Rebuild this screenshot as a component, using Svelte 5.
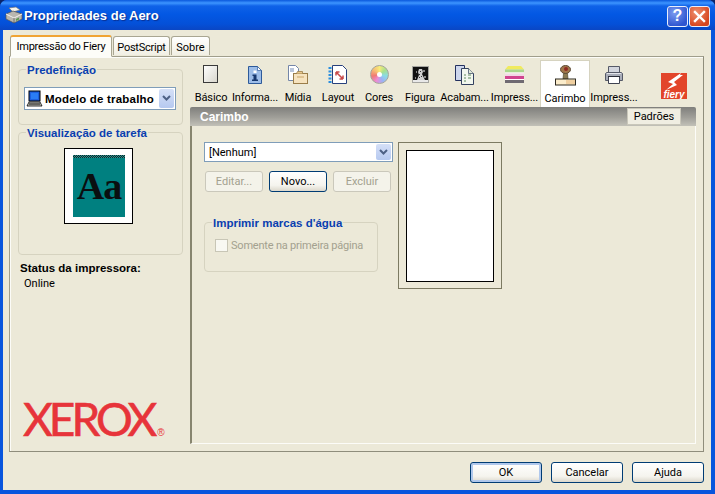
<script lang="ts">
  const tools = [
    { id: 'basico', label: 'Básico', w: 42 },
    { id: 'info', label: 'Informa...', w: 46 },
    { id: 'midia', label: 'Mídia', w: 40 },
    { id: 'layout', label: 'Layout', w: 40 },
    { id: 'cores', label: 'Cores', w: 42 },
    { id: 'figura', label: 'Figura', w: 40 },
    { id: 'acabam', label: 'Acabam...', w: 49 },
    { id: 'impress', label: 'Impress...', w: 51 },
    { id: 'carimbo', label: 'Carimbo', w: 50 },
    { id: 'printer', label: 'Impress...', w: 48 }
  ];
</script>

<div class="window">
  <header class="titlebar">
    <svg class="title-icon" width="18" height="18" viewBox="0 0 18 18">
      <path d="M4 2l7-1 4 3-7 2z" fill="#f4f4f0" stroke="#777" stroke-width=".7"/>
      <path d="M1 8l7-3 9 3v5l-8 4-8-4z" fill="#b9b7b0" stroke="#555" stroke-width=".7"/>
      <path d="M1 8l8 4 8-4" fill="none" stroke="#f2f2ee" stroke-width="1"/>
      <path d="M9 12v5" stroke="#555" stroke-width=".7"/>
      <path d="M11 13l3-1.500v2l-3 1.500z" fill="#5a9a50"/>
    </svg>
    <span class="title-text">Propriedades de Aero</span>
    <div class="caption-buttons">
      <div class="cap help">?</div>
      <div class="cap close">
        <svg width="13" height="13" viewBox="0 0 13 13"><path d="M2 2l9 9M11 2l-9 9" stroke="#fff" stroke-width="2.400" stroke-linecap="square"/></svg>
      </div>
    </div>
  </header>

  <div class="client">
    <nav class="tabs">
      <div class="tab active">Impressão do Fiery</div>
      <div class="tab tab-ps">PostScript</div>
      <div class="tab tab-sobre">Sobre</div>
    </nav>

    <section class="sheet">
      <aside class="left">
        <div class="group preset">
          <span class="legend">Predefinição</span>
          <div class="combo preset-combo">
            <svg class="pc-icon" width="17" height="17" viewBox="0 0 17 17">
              <rect x="3" y="1" width="11" height="10" fill="#1d5fe0" stroke="#000"/>
              <rect x="5" y="3" width="7" height="6" fill="#2a7cf5"/>
              <path d="M3 12h11l2 4H1z" fill="#c9c9c0" stroke="#000" stroke-width=".8"/>
              <path d="M3 14h11" stroke="#000"/>
            </svg>
            <span class="preset-value">Modelo de trabalho</span>
            <span class="arrow">
              <svg width="9" height="7" viewBox="0 0 9 7"><path d="M1 1l3.500 3.500L8 1" fill="none" stroke="#4d6185" stroke-width="2"/></svg>
            </span>
          </div>
        </div>

        <div class="group job">
          <span class="legend">Visualização de tarefa</span>
          <div class="job-sheet">
            <div class="job-dither"></div>
            <div class="job-teal"><span>Aa</span></div>
          </div>
        </div>

        <div class="status">
          <strong>Status da impressora:</strong>
          <p>Online</p>
        </div>

        <div class="xerox">XEROX<span class="reg">®</span></div>
      </aside>

      <main class="right">
        <div class="toolbar">
          {#each tools as t}
            <div class="tool" class:selected={t.id === 'carimbo'} style="width: {t.w}px">
              <div class="tool-icon">
                {#if t.id === 'basico'}
                  <svg width="16" height="19" viewBox="0 0 16 19"><defs><linearGradient id="pg" x1="0" y1="0" x2="1" y2="1"><stop offset="0" stop-color="#fff"/><stop offset="1" stop-color="#d8d6cc"/></linearGradient></defs><rect x=".5" y=".5" width="14" height="17" fill="url(#pg)" stroke="#3a3a3a"/></svg>
                {:else if t.id === 'info'}
                  <svg width="16" height="20" viewBox="0 0 16 20"><path d="M1.500 1.500h9l4 4v13h-13z" fill="#9dbde8" stroke="#2d5a9a"/><path d="M10.500 1.500v4h4z" fill="#fff" stroke="#2d5a9a" stroke-width=".7"/><rect x="6.500" y="5.500" width="3" height="2.500" fill="#fff"/><path d="M5.500 9.500h4v5h1.500v1.500H5v-1.500h1.500v-3.500h-1z" fill="#17386f"/></svg>
                {:else if t.id === 'midia'}
                  <svg width="22" height="20" viewBox="0 0 22 20"><path d="M1.500.5h7l3 3v12h-10z" fill="#fff" stroke="#7486a8"/><path d="M3 3h4v4H3z" fill="#b9c6dc"/><rect x="6.500" y="8.500" width="14" height="10" fill="#f6e3bf" stroke="#9a7d4a"/><path d="M6.500 8.500h3l1-2h5v2" fill="#e9c98e" stroke="#9a7d4a" stroke-width=".8"/><path d="M10 12h7" stroke="#c9a56a"/></svg>
                {:else if t.id === 'layout'}
                  <svg width="20" height="20" viewBox="0 0 20 20"><path d="M4.500.5h10l4 4v14h-14z" fill="#fff" stroke="#27407d"/><path d="M2 2v16" stroke="#2a8fe0" stroke-width="3" stroke-dasharray="2 1.500"/><path d="M8 7l7 7M8 7v3.500M8 7h3.500M15 14v-3.500M15 14h-3.500" fill="none" stroke="#c84a4a" stroke-width="1.500"/></svg>
                {:else if t.id === 'cores'}
                  <div class="wheel"><div></div></div>
                {:else if t.id === 'figura'}
                  <svg width="17" height="17" viewBox="0 0 17 17"><rect x=".5" y=".5" width="16" height="16" fill="#111" stroke="#a5a5a0"/><path d="M7 3h3l1 3-1 2 3 6H5l2-5-1-3z" fill="#cfcfcf"/><path d="M8 5h1v1H8zM7 8h1v1H7zM9 10h1v1H9zM7 11h1v1H7z" fill="#333"/><path d="M11 4h2v2h-2zM4 5h1v2H4zM12 10h2v2h-2zM3 11h1v2H3z" fill="#888"/><path d="M1 14h15v2H1z" fill="#e8e8e8"/></svg>
                {:else if t.id === 'acabam'}
                  <svg width="21" height="21" viewBox="0 0 21 21"><path d="M1.500 1.500h9v15h-9z" fill="#cdd6ec" stroke="#23305e"/><path d="M7.500 4.500h7l5 5v11h-12z" fill="#f2f7ee" stroke="#33415f"/><path d="M14.500 4.500v5h5" fill="#dfe8d8" stroke="#33415f" stroke-width=".7"/><path d="M10 11h2M14 11h3M10 14h2M14 14h3M10 17h2" stroke="#5f8a5f"/></svg>
                {:else if t.id === 'impress'}
                  <svg width="21" height="20" viewBox="0 0 21 20"><path d="M4 1h13l3 3.500H1z" fill="#f0ea5e"/><rect x="1" y="4.500" width="19" height="3" fill="#a9d98c"/><rect x="1" y="7.500" width="19" height="1" fill="#fff"/><rect x="1" y="8.500" width="19" height="2.500" fill="#f2d8e6"/><rect x="1" y="11" width="19" height="3" fill="#d0458f"/><rect x="1" y="14" width="19" height="1" fill="#fff"/><rect x="1" y="15" width="19" height="3" fill="#6f6a72"/></svg>
                {:else if t.id === 'carimbo'}
                  <svg width="21" height="22" viewBox="0 0 21 22"><ellipse cx="10.500" cy="4.500" rx="5" ry="4" fill="#a0764a" stroke="#5d4a35"/><circle cx="11" cy="4" r="2" fill="#8f2a22"/><path d="M8.500 8.500h4l.5 5.500H8z" fill="#8a7a52" stroke="#544a30" stroke-width=".7"/><rect x=".5" y="14" width="20" height="6" fill="#fbeccb" stroke="#2e2a20"/><rect x="11" y="15" width="9" height="4" fill="#f0cfa0"/></svg>
                {:else if t.id === 'printer'}
                  <svg width="20" height="20" viewBox="0 0 20 20"><path d="M4.500 1.500h11v6h-11z" fill="#d3d6de" stroke="#565a68"/><path d="M2.500 7.500h15l1 1v7h-17v-7z" fill="#a9adb8" stroke="#565a68"/><path d="M3 8.500h14" stroke="#e4e6ec"/><path d="M4.500 11.500h11v7h-11z" fill="#fff" stroke="#3f4352"/><path d="M4 11.500h12" stroke="#2a2d38"/></svg>
                {/if}
              </div>
              <span class="tool-label">{t.label}</span>
            </div>
          {/each}
          <div class="fiery">
            <svg width="26" height="26" viewBox="0 0 26 26">
              <path d="M0 0h26v26H0z" fill="#e2452a"/>
              <path d="M20 0L7 9l5 2-7 6 11-5-3-3 9-7-3 0z" fill="#fff"/>
              <text x="13" y="24.500" text-anchor="middle" class="fiery-word">fiery</text>
            </svg>
          </div>
        </div>

        <div class="section-bar">
          <span>Carimbo</span>
          <button class="defaults">Padrões</button>
        </div>

        <div class="sunken">
          <div class="stamp-form">
            <div class="controls">
              <div class="combo stamp-combo">
                <span class="stamp-value">[Nenhum]</span>
                <span class="arrow">
                  <svg width="9" height="7" viewBox="0 0 9 7"><path d="M1 1l3.500 3.500L8 1" fill="none" stroke="#4d6185" stroke-width="2"/></svg>
                </span>
              </div>
              <div class="btn-row">
                <div class="xp-btn off">Editar...</div>
                <div class="xp-btn">Novo...</div>
                <div class="xp-btn off">Excluir</div>
              </div>
              <div class="group watermark">
                <span class="legend">Imprimir marcas d'água</span>
                <label class="check"><span class="box"></span>Somente na primeira página</label>
              </div>
            </div>
            <div class="page-preview"><div class="page"></div></div>
          </div>
        </div>
      </main>
    </section>

    <footer class="dialog-buttons">
      <div class="xp-btn wide default">OK</div>
      <div class="xp-btn wide">Cancelar</div>
      <div class="xp-btn wide">Ajuda</div>
    </footer>
  </div>
</div>

<style>
  :global(body) {
    margin: 0;
    background: #0a246a;
  }

  .window {
    width: 715px;
    height: 494px;
    display: flex;
    flex-direction: column;
    box-sizing: border-box;
    overflow: hidden;
    border-radius: 7px 7px 0 0;
    background: #0855dd;
    font-family: Roboto, "Liberation Sans", sans-serif;
    font-size: 11px;
    color: #000;
  }

  .titlebar {
    height: 30px;
    flex: none;
    display: flex;
    align-items: center;
    padding: 0 5px 0 4px;
    background: linear-gradient(#0a58dd 0, #3d95ff 3px, #0f62e8 6px, #0358e4 14px, #0450d8 24px, #0a46c4 30px);
  }

  .title-icon { margin-left: 1px; }

  .title-text {
    margin-left: 1px;
    font-family: "Liberation Sans", Arial, sans-serif;
    font-weight: bold;
    font-size: 13px;
    color: #fff;
    text-shadow: 1px 1px 1px #0a2f90;
  }

  .caption-buttons {
    margin-left: auto;
    display: flex;
    gap: 1px;
    margin-top: 2px;
  }

  .cap {
    width: 21px;
    height: 21px;
    box-sizing: border-box;
    border: 1px solid #e8eefc;
    border-radius: 3px;
    display: flex;
    align-items: center;
    justify-content: center;
    color: #fff;
    font-family: "Liberation Sans", Arial, sans-serif;
    font-weight: bold;
    font-size: 16px;
  }

  .help { background: radial-gradient(circle at 35% 30%, #7e9df0, #2e55d0 75%); }
  .close { background: radial-gradient(circle at 35% 30%, #ee8f6e, #d6451f 75%); }

  .client {
    flex: 1;
    margin: 0 4px 4px 3px;
    background: #ece9d8;
    display: flex;
    flex-direction: column;
    min-height: 0;
  }

  .tabs {
    display: flex;
    align-items: flex-end;
    height: 26px;
    margin-left: 7px;
    position: relative;
    z-index: 1;
    flex: none;
  }

  .tab {
    height: 14px;
    padding-top: 4px;
    box-sizing: content-box;
    border: 1px solid #a9a692;
    border-bottom: none;
    border-radius: 3px 3px 0 0;
    margin-right: 1px;
    text-align: center;
    line-height: 14px;
    letter-spacing: -0.25px;
    background: linear-gradient(#fff, #f1efe4);
    margin-bottom: 1px;
  }

  .tab.active {
    width: 100px;
    height: 16px;
    padding-top: 3px;
    background: #fdfdf8;
    border-top: 2px solid #f0a433;
    border-bottom: 1px solid #fdfdf8;
    margin-bottom: -1px;
  }

  .tab-ps { width: 55px; }
  .tab-sobre { width: 37px; letter-spacing: 0; }

  .sheet {
    width: 695px;
    height: 396px;
    margin-left: 6px;
    box-sizing: border-box;
    border: 1px solid #a09e8c;
    border-right-color: #8f8d7c;
    border-bottom-color: #8f8d7c;
    box-shadow: inset 1px 1px 0 #fcfcf8;
    display: flex;
    flex: none;
    background: #ece9d8;
  }

  .left {
    width: 165px;
    margin-left: 8px;
    padding-top: 12px;
    flex: none;
    display: flex;
    flex-direction: column;
  }

  .group {
    position: relative;
    box-sizing: border-box;
    border: 1px solid #d6d3c0;
    border-radius: 4px;
  }

  .legend {
    position: absolute;
    top: -6px;
    left: 7px;
    padding: 0 1px;
    background: #ece9d8;
    font-family: "Liberation Sans", Arial, sans-serif;
    font-weight: bold;
    font-size: 11.500px;
    line-height: 13px;
    color: #0a3fb0;
    white-space: nowrap;
  }

  .preset {
    height: 56px;
    padding: 17px 5px 0 5px;
  }

  .combo {
    background: #fff;
    border: 1px solid #7f9db9;
    box-sizing: border-box;
    display: flex;
    align-items: center;
  }

  .preset-combo {
    height: 23px;
    width: 152px;
  }

  .pc-icon { margin-left: 1px; flex: none; }

  .preset-value {
    font-family: "Liberation Sans", Arial, sans-serif;
    font-weight: bold;
    font-size: 11.500px;
    letter-spacing: 0.2px;
    margin-left: 2px;
    white-space: nowrap;
  }

  .arrow {
    margin-left: auto;
    width: 15px;
    height: calc(100% - 2px);
    margin-right: 1px;
    flex: none;
    background: linear-gradient(#d5e0f7, #b6c9f0);
    border-radius: 2px;
    display: flex;
    align-items: center;
    justify-content: center;
  }

  .job {
    margin-top: 7px;
    height: 123px;
    padding-top: 15px;
  }

  .job-sheet {
    width: 69px;
    height: 76px;
    margin-left: 45px;
    box-sizing: border-box;
    border: 1px solid #000;
    background: #fff;
    padding: 6px 7px 0 8px;
  }

  .job-dither {
    height: 3px;
    background: repeating-conic-gradient(#0a2a2a 0 25%, #2f8f8f 0 50%) 0 0 / 2px 2px;
  }

  .job-teal {
    height: 59px;
    background: #008080;
    display: flex;
    align-items: center;
    justify-content: center;
    padding-bottom: 3px;
    box-sizing: border-box;
  }

  .job-teal span {
    font-family: "Liberation Serif", serif;
    font-weight: bold;
    font-size: 38px;
    line-height: 38px;
    letter-spacing: -1px;
    color: #0a0f10;
  }

  .status {
    margin: 6px 0 0 2px;
  }

  .status strong {
    display: block;
    font-family: "Liberation Sans", Arial, sans-serif;
    font-size: 11.500px;
    line-height: 14px;
  }

  .status p {
    margin: 2px 0 0 4px;
    line-height: 14px;
  }

  .xerox {
    margin: auto 0 0 5px;
    font-family: Lato, "Liberation Sans", sans-serif;
    font-size: 46px;
    line-height: 36px;
    letter-spacing: -4px;
    -webkit-text-stroke: 0.6px #e7343a;
    color: #e7343a;
    white-space: nowrap;
  }

  .reg {
    margin-left: 4px;
    font-family: "Liberation Sans", Arial, sans-serif;
    font-size: 10px;
    letter-spacing: 0;
    -webkit-text-stroke: 0;
    color: #e7343a;
  }

  .right {
    margin-left: 7px;
    width: 506px;
    flex: none;
    display: flex;
    flex-direction: column;
  }

  .toolbar {
    height: 50px;
    flex: none;
    display: flex;
    align-items: flex-end;
  }

  .tool {
    height: 47px;
    box-sizing: border-box;
    display: flex;
    flex-direction: column;
    align-items: center;
    flex: none;
  }

  .tool.selected {
    background: #fff;
    border: 1px solid #d6d3c0;
    border-bottom: none;
  }

  .tool-icon {
    height: 27px;
    display: flex;
    align-items: center;
    justify-content: center;
    padding-top: 1px;
  }

  .tool-label {
    margin-top: 3px;
    line-height: 14px;
    letter-spacing: -0.1px;
    white-space: nowrap;
  }

  .wheel {
    width: 19px;
    height: 19px;
    border-radius: 50%;
    background: conic-gradient(#f8ec7a, #a8e08c, #8adce4, #9cb2f4, #ec8cd6, #f07a74, #f6bc74, #f8ec7a);
    display: flex;
    align-items: center;
    justify-content: center;
    border: 1px solid #a5a59a;
    box-sizing: border-box;
  }

  .wheel div {
    width: 5px;
    height: 5px;
    background: #fff;
    border-radius: 50%;
  }

  .fiery {
    margin-left: 23px;
    margin-bottom: 8px;
    line-height: 0;
  }

  .fiery-word {
    font-family: "Liberation Sans", Arial, sans-serif;
    font-weight: bold;
    font-style: italic;
    font-size: 10px;
    fill: #fff;
  }

  .section-bar {
    height: 19px;
    flex: none;
    display: flex;
    align-items: center;
    justify-content: space-between;
    padding: 0 15px 0 10px;
    border-radius: 2px 2px 0 0;
    background: linear-gradient(#7f7f7c, #a09f99 55%, #c2c1b8);
    color: #fff;
    font-family: "Liberation Sans", Arial, sans-serif;
    font-weight: bold;
    font-size: 12px;
  }

  .defaults {
    width: 54px;
    height: 17px;
    padding: 0;
    border: 1px solid #c9c7ba;
    background: #f0eee2;
    font: 11px Roboto, "Liberation Sans", sans-serif;
    color: #000;
  }

  .sunken {
    flex: 1;
    border-left: 2px solid #87856f;
    border-bottom: 1px solid #fcfcf8;
    border-right: 1px solid #fcfcf8;
    margin-bottom: 7px;
    padding: 16px 0 0 12px;
  }

  .stamp-form {
    display: flex;
    gap: 5px;
    align-items: flex-start;
  }

  .controls { width: 189px; }

  .stamp-combo {
    height: 20px;
    width: 189px;
  }

  .stamp-value {
    margin-left: 4px;
  }

  .btn-row {
    display: flex;
    justify-content: space-between;
    margin: 9px 2px 0 1px;
  }

  .xp-btn {
    width: 58px;
    height: 21px;
    box-sizing: border-box;
    border: 1px solid #003c74;
    border-radius: 3px;
    background: linear-gradient(#fff, #f5f4ee 70%, #dcd8cc);
    display: flex;
    align-items: center;
    justify-content: center;
  }

  .xp-btn.off {
    border-color: #cac8bb;
    background: #f4f3ea;
    color: #a3a18f;
  }

  .watermark {
    width: 174px;
    height: 50px;
    margin-top: 30px;
    padding: 16px 0 0 10px;
  }

  .check {
    display: flex;
    align-items: center;
    color: #a3a18f;
    letter-spacing: -0.2px;
    white-space: nowrap;
  }

  .box {
    width: 13px;
    height: 13px;
    box-sizing: border-box;
    border: 1px solid #c8c6b6;
    background: #f8f8f2;
    margin-right: 3px;
    flex: none;
  }

  .page-preview {
    width: 104px;
    height: 147px;
    box-sizing: border-box;
    border: 1px solid #7c7a62;
    padding: 7px;
  }

  .page {
    width: 88px;
    height: 132px;
    box-sizing: border-box;
    border: 1px solid #000;
    background: #fff;
  }

  .dialog-buttons {
    display: flex;
    justify-content: flex-end;
    gap: 9px;
    padding: 10px 7px 0 0;
  }

  .xp-btn.wide {
    width: 72px;
    height: 21px;
  }

  .xp-btn.default {
    box-shadow: inset 0 0 0 2px #b0c8ec;
  }
</style>
